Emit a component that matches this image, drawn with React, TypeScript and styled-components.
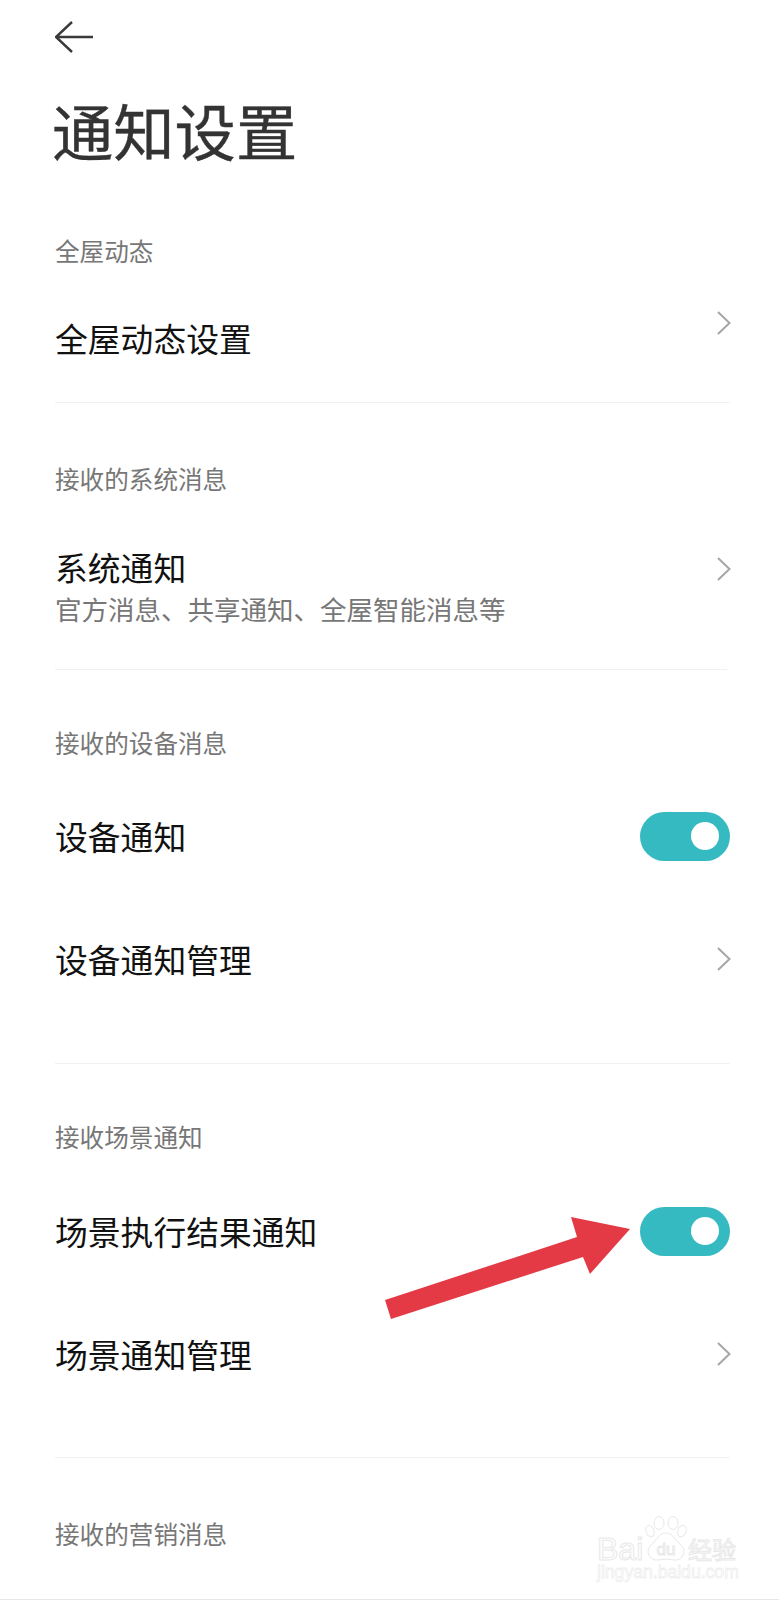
import React from 'react';
import styled, { createGlobalStyle } from 'styled-components';

const GlobalStyle = createGlobalStyle`
    html, body {
        margin: 0;
        padding: 0;
        background: #fff;
    }
    body {
        font-family: "Noto Sans CJK SC", "Noto Sans", sans-serif;
    }
`;

const Page = styled.div`
    position: relative;
    box-sizing: border-box;
    width: 779px;
    height: 1600px;
    padding: 0 49px 0 55px;
    overflow: hidden;
    background: #fff;
    border-bottom: 1px solid #e8e8e8;
`;

const BackButton = styled.div`
    display: flex;
    align-items: center;
    height: 74px;
    color: #3a3a3a;
`;

const Title = styled.h1`
    margin: 0 0 0 -3px;
    height: 136px;
    font-size: 61.3px;
    font-weight: 400;
    line-height: 111px;
    color: #333;
    -webkit-text-stroke: 0.4px #333;
`;

const Section = styled.section<{ $top: number; $bottom?: number }>`
    padding: ${p => p.$top}px 0 ${p => p.$bottom ?? 0}px;
`;

const Divider = styled.div<{ $inset?: number }>`
    height: 1px;
    margin-right: ${p => p.$inset ?? 0}px;
    background: #f1f1f1;
`;

const Label = styled.div`
    height: 34px;
    font-size: 24.6px;
    line-height: 34px;
    color: #777;
`;

const List = styled.div<{ $top: number }>`
    display: flex;
    flex-direction: column;
    gap: 47px;
    margin-top: ${p => p.$top}px;
`;

const Row = styled.div`
    display: flex;
    align-items: center;
    justify-content: space-between;
    min-height: 76px;
`;

const RowText = styled.div`
    display: flex;
    flex-direction: column;
`;

const RowTitle = styled.span`
    font-size: 32.8px;
    line-height: 44px;
    color: #111;
`;

const RowSub = styled.span`
    margin-top: 2px;
    font-size: 26.5px;
    line-height: 36px;
    color: #777;
`;

const Chevron = styled.svg<{ $lift?: number }>`
    flex: none;
    width: 16px;
    height: 26px;
    margin: 0 -2px ${p => p.$lift ?? 0}px 0;
    color: #a6a6a6;
`;

const Switch = styled.div`
    display: flex;
    align-items: center;
    justify-content: flex-end;
    box-sizing: border-box;
    width: 90px;
    height: 49px;
    padding-right: 11px;
    border-radius: 25px;
    background: #36bac1;
`;

const Knob = styled.span`
    width: 28px;
    height: 28px;
    border-radius: 50%;
    background: #fff;
`;

const Arrow = styled.svg`
    position: absolute;
    left: 380px;
    top: 1210px;
    width: 255px;
    height: 115px;
`;

const Watermark = styled.div`
    position: absolute;
    left: 597px;
    top: 1516px;
    width: 146px;
`;

const MarkLine = styled.div`
    display: flex;
    align-items: flex-end;
    height: 46px;
`;

const MarkWord = styled.span`
    width: 48px;
    font-family: "Liberation Sans", sans-serif;
    font-size: 32px;
    line-height: 26px;
    color: #fff;
    -webkit-text-stroke: 1px #e8e8e8;
`;

const MarkCjk = styled.span`
    margin-left: 1px;
    font-size: 24px;
    line-height: 27px;
    white-space: nowrap;
    color: #fff;
    -webkit-text-stroke: 1px #e8e8e8;
`;

const MarkUrl = styled.div`
    font-family: "Liberation Sans", sans-serif;
    font-size: 17.6px;
    line-height: 20px;
    white-space: nowrap;
    color: #fff;
    -webkit-text-stroke: 0.8px #eeeeee;
`;

const More = ({ lift }: { lift?: number }) => (
    <Chevron $lift={lift} viewBox="0 0 16 26" fill="none">
        <path d="M2 2l11.5 11L2 24" stroke="currentColor" strokeWidth="2" />
    </Chevron>
);

const Toggle = () => (
    <Switch>
        <Knob />
    </Switch>
);

const App = () => (
    <Page>
        <GlobalStyle />
        <BackButton>
            <svg width="40" height="32" viewBox="0 0 40 32" fill="none">
                <path
                    d="M38 16H1M17 1L1 16l16 15"
                    stroke="currentColor"
                    strokeWidth="2.4"
                />
            </svg>
        </BackButton>
        <Title>通知设置</Title>

        <Section $top={23} $bottom={26}>
            <Label>全屋动态</Label>
            <List $top={33}>
                <Row>
                    <RowTitle>全屋动态设置</RowTitle>
                    <More lift={30} />
                </Row>
            </List>
        </Section>
        <Divider />

        <Section $top={58} $bottom={42}>
            <Label>接收的系统消息</Label>
            <List $top={50}>
                <Row>
                    <RowText>
                        <RowTitle>系统通知</RowTitle>
                        <RowSub>官方消息、共享通知、全屋智能消息等</RowSub>
                    </RowText>
                    <More lift={34} />
                </Row>
            </List>
        </Section>
        <Divider $inset={3} />

        <Section $top={55} $bottom={66}>
            <Label>接收的设备消息</Label>
            <List $top={39}>
                <Row>
                    <RowTitle>设备通知</RowTitle>
                    <Toggle />
                </Row>
                <Row>
                    <RowTitle>设备通知管理</RowTitle>
                    <More />
                </Row>
            </List>
        </Section>
        <Divider />

        <Section $top={55} $bottom={65}>
            <Label>接收场景通知</Label>
            <List $top={40}>
                <Row>
                    <RowTitle>场景执行结果通知</RowTitle>
                    <Toggle />
                </Row>
                <Row>
                    <RowTitle>场景通知管理</RowTitle>
                    <More />
                </Row>
            </List>
        </Section>
        <Divider />

        <Section $top={58}>
            <Label>接收的营销消息</Label>
        </Section>

        <Arrow viewBox="380 1210 255 115">
            <polygon
                points="385,1300 391,1319 583,1257 590,1274 630,1229 571,1217 577,1237"
                fill="#e43a46"
            />
        </Arrow>

        <Watermark>
            <MarkLine>
                <MarkWord>Bai</MarkWord>
                <svg width="42" height="46" viewBox="0 0 42 46" fill="#fff" stroke="#e8e8e8">
                    <ellipse cx="5" cy="15" rx="4" ry="6" transform="rotate(-20 5 15)" />
                    <ellipse cx="14" cy="7" rx="5" ry="6.5" />
                    <ellipse cx="28" cy="7" rx="5" ry="6.5" />
                    <ellipse cx="37" cy="15" rx="4" ry="6" transform="rotate(20 37 15)" />
                    <path d="M21 17c7 0 9 7 15 12 6 6 2 16-7 15-5-1-11-1-16 0-9 1-13-9-7-15 6-5 8-12 15-12z" />
                    <text x="21" y="39" textAnchor="middle" fontFamily="Liberation Sans" fontSize="17">du</text>
                </svg>
                <MarkCjk>经验</MarkCjk>
            </MarkLine>
            <MarkUrl>jingyan.baidu.com</MarkUrl>
        </Watermark>
    </Page>
);

export default App;
